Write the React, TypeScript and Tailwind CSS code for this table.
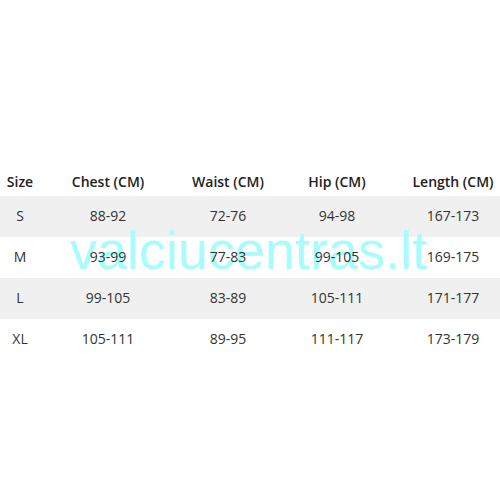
const rows = [
  ["S", "88-92", "72-76", "94-98", "167-173"],
  ["M", "93-99", "77-83", "99-105", "169-175"],
  ["L", "99-105", "83-89", "105-111", "171-177"],
  ["XL", "105-111", "89-95", "111-117", "173-179"],
];

const head = ["Size", "Chest (CM)", "Waist (CM)", "Hip (CM)", "Length (CM)"];

export default function App() {
  return (
    <div className="relative w-[500px] h-[500px] bg-white overflow-hidden font-['Open_Sans',sans-serif] text-[#333]">
      <div className="pt-[168px]">
        <div className="grid grid-cols-[40px_136px_104px_114px_106px] h-[28px] items-center text-[14px] font-semibold text-[#222]">
          {head.map((h, i) => (
            <div key={h} className={`relative z-10 text-center whitespace-nowrap pb-px ${i === 4 ? "pl-3" : ""}`}>{h}</div>
          ))}
        </div>
        {rows.map((r, ri) => (
          <div
            key={r[0]}
            className={`grid grid-cols-[40px_136px_104px_114px_106px] h-[41px] items-center text-[14px] ${ri % 2 === 0 ? "bg-[#f0f0f0]" : "bg-white"}`}
          >
            {r.map((c, i) => (
              <div key={i} className={`relative z-10 text-center whitespace-nowrap pb-[2px] ${i === 4 ? "pl-3" : ""}`}>{c}</div>
            ))}
          </div>
        ))}
      </div>
      <div className="absolute left-[70px] top-[223px] z-[5] leading-none text-[54px] font-['Liberation_Sans',sans-serif] text-[#a8fcfc] pointer-events-none whitespace-nowrap">
        valciucentras.lt
      </div>
    </div>
  );
}
